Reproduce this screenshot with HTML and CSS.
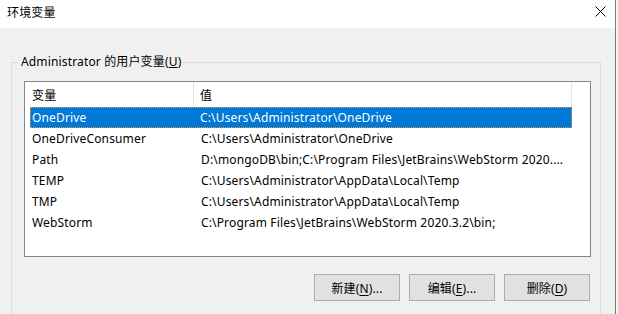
FILE: index.html
```html
<!DOCTYPE html>
<html lang="zh-CN">
<head>
  <meta charset="UTF-8">
  <title>环境变量</title>
  <link rel="stylesheet" href="styles.css">
</head>
<body>
  <div class="screen">
    <div class="dialog">
      <div class="titlebar">
        <span class="title">环境变量</span>
        <span class="close">
          <svg width="11" height="11" viewBox="0 0 11 11"><path d="M0.5 0.5 L10.5 10.5 M10.5 0.5 L0.5 10.5" stroke="#000" stroke-width="1" fill="none"/></svg>
        </span>
      </div>
      <div class="body">
        <div class="group">
          <div class="legend">Administrator 的用户变量(<u>U</u>)</div>
          <div class="listbox">
            <div class="list-head">
              <div class="head-cell name">变量</div>
              <div class="head-cell value">值</div>
            </div>
            <div class="rows">
              <div class="row selected"><span class="c1">OneDrive</span><span class="c2">C:\Users\Administrator\OneDrive</span></div>
              <div class="row"><span class="c1">OneDriveConsumer</span><span class="c2">C:\Users\Administrator\OneDrive</span></div>
              <div class="row"><span class="c1">Path</span><span class="c2">D:\mongoDB\bin;C:\Program Files\JetBrains\WebStorm 2020....</span></div>
              <div class="row"><span class="c1">TEMP</span><span class="c2">C:\Users\Administrator\AppData\Local\Temp</span></div>
              <div class="row"><span class="c1">TMP</span><span class="c2">C:\Users\Administrator\AppData\Local\Temp</span></div>
              <div class="row"><span class="c1">WebStorm</span><span class="c2">C:\Program Files\JetBrains\WebStorm 2020.3.2\bin;</span></div>
            </div>
          </div>
          <div class="buttons">
            <button class="btn">新建(<u>N</u>)...</button>
            <button class="btn">编辑(<u>E</u>)...</button>
            <button class="btn last">删除(<u>D</u>)</button>
          </div>
        </div>
      </div>
    </div>
    <div class="edge"></div>
  </div>
</body>
</html>
```

FILE: styles.css
```css
html, body {
  margin: 0;
  padding: 0;
}
body {
  width: 618px;
  height: 314px;
  overflow: hidden;
  background: #f0f0f0;
  font-family: "Noto Sans", "Noto Sans CJK SC", sans-serif;
  font-size: 12px;
  letter-spacing: 0.15px;
  color: #000;
}
.screen {
  display: flex;
  height: 314px;
}
.dialog {
  width: 615px;
  background: #f0f0f0;
}
.edge {
  width: 2px;
  border-left: 1px solid #7a7a7a;
  background: #f4f4f4;
}
.titlebar {
  height: 28px;
  background: #fff;
  display: flex;
  align-items: center;
  justify-content: space-between;
}
.title {
  padding-left: 7px;
  margin-top: -4px;
}
.close {
  display: flex;
  margin-right: 9px;
  margin-top: -5px;
}
.body {
  padding: 34px 0 0 11px;
}
.group {
  position: relative;
  width: 590px;
  height: 252px;
  border: 1px solid #dcdcdc;
  border-bottom: none;
  box-sizing: border-box;
  padding: 18px 0 0 12px;
}
.legend {
  position: absolute;
  left: 6px;
  top: -10px;
  padding: 0 2px 0 3px;
  background: #f0f0f0;
  line-height: 18px;
}
.listbox {
  width: 567px;
  height: 176px;
  box-sizing: border-box;
  border: 1px solid #828790;
  background: #fff;
}
.list-head {
  display: flex;
  height: 25px;
}
.head-cell {
  display: flex;
  align-items: center;
  box-sizing: border-box;
  border-right: 1px solid #e5e5e5;
}
.head-cell.name {
  width: 169px;
  padding-left: 7px;
}
.head-cell.value {
  width: 378px;
  padding-left: 6px;
}
.rows {
  padding-left: 5px;
}
.row {
  display: flex;
  width: 542px;
  height: 21px;
  align-items: center;
  box-sizing: border-box;
  white-space: nowrap;
  overflow: hidden;
}
.row.selected {
  background: #0078d7;
  color: #fff;
  border: 1px dotted #e8953a;
}
.c1 {
  flex: none;
  width: 169px;
  padding-left: 2px;
}
.row.selected .c1 {
  width: 168px;
  padding-left: 1px;
}
.buttons {
  display: flex;
  justify-content: flex-end;
  width: 566px;
  margin-top: 17px;
}
.btn {
  width: 86px;
  height: 27px;
  margin-right: 9px;
  background: #e1e1e1;
  border: 1px solid #adadad;
  font-family: inherit;
  font-size: 12px;
  letter-spacing: inherit;
  color: #000;
  padding: 0;
}
.btn.last {
  margin-right: 0;
}
.btn u {
  text-underline-offset: 2px;
}
```
